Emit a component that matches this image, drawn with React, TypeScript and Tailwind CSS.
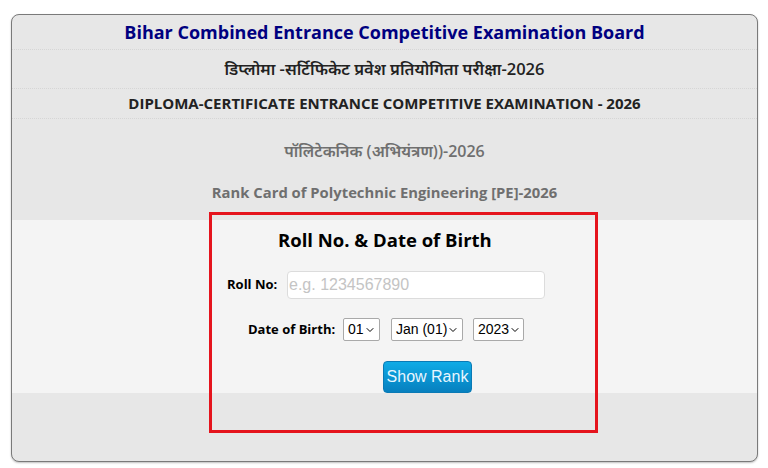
import { ChevronDown } from 'lucide-react';

const sans = "font-['Open_Sans','Noto_Sans',sans-serif]";
const arial = "font-['Liberation_Sans',Arial,sans-serif]";

function Select({ value, width }: { value: string; width: string }) {
    return (
        <div className={`${width} shrink-0 whitespace-nowrap h-[23px] flex items-center justify-between pl-[4px] pr-[3px] bg-white border border-[#a9a9a9] rounded-[2px] text-[14px] text-black ${arial}`}>
            <span>{value}</span>
            <ChevronDown className="w-[12px] h-[12px] shrink-0" strokeWidth={2} />
        </div>
    );
}

export default function App() {
    return (
        <div className="w-[768px] h-[468px] bg-white pt-[14px] px-[11px]">
            <div className="relative w-[747px] h-[448px] border border-[#7a7a7a] rounded-[8px] bg-[#e7e7e7] overflow-hidden shadow-[0_1px_2px_rgba(0,0,0,0.25)]">
                {/* Header rows */}
                <div className={`h-[35px] flex items-center justify-center border-b border-dotted border-[#d6d6d6] text-[18px] font-bold text-[#000080] ${sans}`}>
                    Bihar Combined Entrance Competitive Examination Board
                </div>
                <div className={`h-[39px] flex items-center justify-center border-b border-dotted border-[#d6d6d6] text-[16.5px] font-semibold text-[#222] ${sans}`}>
                    डिप्लोमा -सर्टिफिकेट प्रवेश प्रतियोगिता परीक्षा-2026
                </div>
                <div className={`h-[30px] flex items-center justify-center border-b border-dotted border-[#d6d6d6] text-[15px] font-bold text-[#222] ${sans}`}>
                    DIPLOMA-CERTIFICATE ENTRANCE COMPETITIVE EXAMINATION - 2026
                </div>
                <div className={`h-[101px] flex flex-col items-center pt-[20px] gap-[18px] text-[#6f6f6f] ${sans}`}>
                    <div className="text-[16px] font-semibold leading-[24px]">पॉलिटेकनिक (अभियंत्रण))-2026</div>
                    <div className="text-[14.8px] font-bold leading-[22px]">Rank Card of Polytechnic Engineering [PE]-2026</div>
                </div>

                {/* Form */}
                <div className="h-[173px] bg-[#f4f4f4] flex flex-col">
                    <div className={`mt-[7px] pl-[266px] text-[18.5px] font-bold text-black leading-[26px] ${sans}`}>Roll No. &amp; Date of Birth</div>
                    <div className="mt-[18px] pl-[215px] flex items-center">
                        <span className={`w-[60px] shrink-0 text-[13px] font-bold text-black ${sans}`}>Roll No:</span>
                        <input
                            placeholder="e.g. 1234567890"
                            className={`w-[258px] h-[28px] px-[1px] bg-white border border-[#dcdcdc] rounded-[4px] text-[16px] placeholder:text-[#c4c4c4] outline-none ${arial}`}
                        />
                    </div>
                    <div className="mt-[19px] pl-[236px] flex items-center">
                        <span className={`w-[95px] shrink-0 text-[13px] font-bold text-black ${sans}`}>Date of Birth:</span>
                        <Select value="01" width="w-[37px]" />
                        <div className="w-[11px] shrink-0" />
                        <Select value="Jan (01)" width="w-[72px]" />
                        <div className="w-[10px] shrink-0" />
                        <Select value="2023" width="w-[51px]" />
                    </div>
                    <div className="mt-[20px] pl-[371px]">
                        <button className={`w-[89px] h-[32px] rounded-[4px] text-[#e8f6ff] text-[16px] bg-gradient-to-b from-[#10abe6] to-[#0780bf] border border-[#0a7ab5] ${arial}`}>
                            Show Rank
                        </button>
                    </div>
                </div>

                {/* Red highlight overlay */}
                <div className="absolute left-[197px] top-[197px] w-[389px] h-[221px] border-[3px] border-[#e5141d] pointer-events-none" />
            </div>
        </div>
    );
}
